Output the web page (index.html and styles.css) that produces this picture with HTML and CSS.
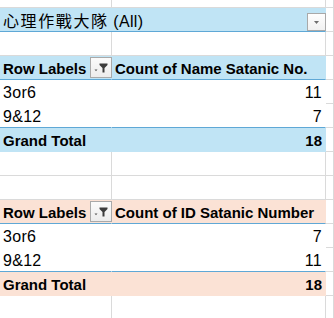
FILE: index.html
```html
<!DOCTYPE html>
<html>
<head>
<meta charset="utf-8">
<link rel="stylesheet" href="styles.css">
</head>
<body>
<div class="sheet">
  <div class="c r0"></div><div class="c r0"></div><div class="c r0"></div>

  <div class="c filter blue sep">
    <span class="ftext"><span class="cjk">心理作戰大隊</span> (All)</span>
    <span class="dd"><svg width="17" height="16" viewBox="0 0 17 16"><path d="M6 7h5l-2.5 3z" fill="#6e6e6e"/></svg></span>
  </div>
  <div class="c"></div>

  <div class="c"></div><div class="c"></div><div class="c"></div>

  <div class="c pv blue sep hdr"><span>Row Labels</span>
    <span class="fbtn"><svg width="20" height="19" viewBox="0 0 20 19"><path d="M3.5 11.5h3l-1.5 1.8z" fill="#555"/><path d="M8.5 5.5h8v1.5l-3 3v4.5h-2v-4.5l-3-3z" fill="#3c3c3c"/></svg></span>
  </div>
  <div class="c pv blue sep hdr"><span>Count of Name Satanic No.</span></div>
  <div class="c"></div>

  <div class="c pv">3or6</div><div class="c pv num">11</div><div class="c"></div>
  <div class="c pv sep">9&amp;12</div><div class="c pv num sep">7</div><div class="c"></div>
  <div class="c pv blue tot">Grand Total</div><div class="c pv blue tot num">18</div><div class="c"></div>

  <div class="c"></div><div class="c"></div><div class="c"></div>
  <div class="c"></div><div class="c"></div><div class="c"></div>

  <div class="c pv peach sep hdr"><span>Row Labels</span>
    <span class="fbtn"><svg width="20" height="19" viewBox="0 0 20 19"><path d="M3.5 11.5h3l-1.5 1.8z" fill="#555"/><path d="M8.5 5.5h8v1.5l-3 3v4.5h-2v-4.5l-3-3z" fill="#3c3c3c"/></svg></span>
  </div>
  <div class="c pv peach sep hdr"><span>Count of ID Satanic Number</span></div>
  <div class="c"></div>

  <div class="c pv">3or6</div><div class="c pv num">7</div><div class="c"></div>
  <div class="c pv sep">9&amp;12</div><div class="c pv num sep">11</div><div class="c"></div>
  <div class="c pv peach tot">Grand Total</div><div class="c pv peach tot num">18</div><div class="c"></div>

  <div class="c"></div><div class="c"></div><div class="c"></div>
</div>
</body>
</html>
```
FILE: styles.css
```css
html, body {
  margin: 0;
  padding: 0;
  background: #ffffff;
}
.sheet {
  display: grid;
  grid-template-columns: 112px 214px 1fr;
  grid-template-rows: 8px;
  grid-auto-rows: 24px;
  font-family: "Liberation Sans", Arial, sans-serif;
  font-size: 16px;
  color: #000;
  overflow: hidden;
  height: 318px;
}
.c {
  box-sizing: border-box;
  border-right: 1px solid #dadada;
  border-bottom: 1px solid #dadada;
  padding: 2px 3px 0 3px;
  line-height: 21px;
  white-space: nowrap;
  overflow: visible;
  min-width: 0;
  letter-spacing: 0.3px;
}
.r0 { padding: 0; }
.pv {
  border-right-color: transparent;
  border-bottom-color: transparent;
  background: #ffffff;
}
.blue { background: #c0e4f5; }
.peach { background: #fbe2d5; }
.sep { border-bottom-color: #5fa8d6; }
.hdr, .tot {
  font-weight: bold;
  font-size: 15px;
  letter-spacing: 0;
}
.num { text-align: right; padding-right: 3px; }

.filter {
  grid-column: span 2;
  display: flex;
  justify-content: space-between;
  border-right-color: transparent;
  padding-right: 0;
}
.ftext { align-self: flex-start; }
.cjk {
  font-family: "Noto Sans CJK TC", "Noto Sans CJK SC", sans-serif;
  font-size: 16px;
  letter-spacing: 1.6px;
  font-weight: normal;
}
.dd {
  align-self: flex-end;
  box-sizing: border-box;
  width: 19px;
  height: 18px;
  border: 1px solid #a9a9a9;
  background: linear-gradient(#fefefe, #f1f1f1);
  display: flex;
  margin-right: -1px;
}

.hdr {
  display: flex;
  justify-content: space-between;
  align-items: flex-start;
}
.hdr .fbtn {
  box-sizing: border-box;
  width: 22px;
  height: 21px;
  margin-top: -1px;
  margin-right: -4px;
  border: 1px solid #a9a9a9;
  background: linear-gradient(#fbfbfb, #ececec);
  display: flex;
}
```
